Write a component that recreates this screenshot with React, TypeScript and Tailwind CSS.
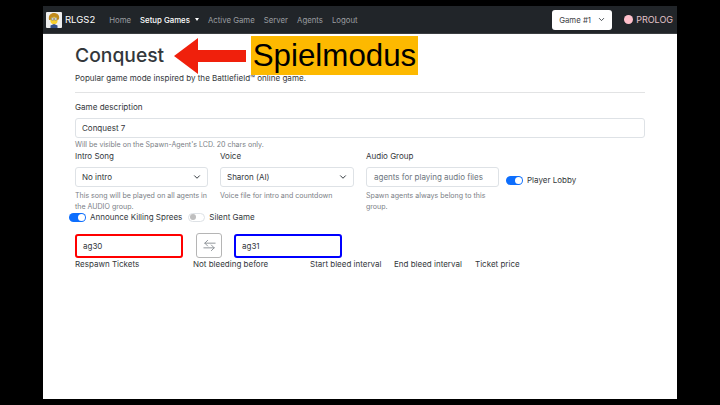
import React from "react";

const Chevron = ({ className = "" }: { className?: string }) => (
  <svg viewBox="0 0 16 16" className={className} fill="none" stroke="#343a40" strokeWidth="2" strokeLinecap="round" strokeLinejoin="round">
    <path d="m3 5.5 5 5 5-5" />
  </svg>
);

const Switch = ({ on }: { on: boolean }) =>
  on ? (
    <span className="flex h-[9px] w-[17px] shrink-0 items-center justify-end rounded-full bg-[#0d6efd] px-[1px]">
      <span className="h-[7px] w-[7px] rounded-full bg-white" />
    </span>
  ) : (
    <span className="flex h-[9px] w-[17px] shrink-0 items-center rounded-full border border-[#dee2e6] bg-white px-[1px]">
      <span className="h-[6px] w-[6px] rounded-full bg-[#bfbfbf]" />
    </span>
  );

const Select = ({ value, w }: { value: string; w: string }) => (
  <div className={`flex h-[20px] items-center justify-between rounded-[3px] border border-[#dee2e6] bg-white pl-[6px] pr-[6px] ${w}`}>
    <span>{value}</span>
    <Chevron className="h-[8px] w-[8px]" />
  </div>
);

export default function App() {
  return (
    <div className="flex h-[405px] w-[720px] bg-black pl-[43px] pt-[6px] pb-[6px] text-[8px] leading-[12px] text-[#33373b] [font-family:Inter,sans-serif]">
      <div className="relative flex h-[393px] w-[634px] flex-col bg-white">
        <nav className="flex h-[28px] shrink-0 items-center border-b border-[#3a3d40] bg-[#212529] pl-[3px] pr-[3px]">
          <svg viewBox="0 0 16 16" className="h-[16px] w-[16px] shrink-0">
            <rect width="16" height="16" rx="1" fill="#efefef" />
            <path d="M3 8C2 3 5 1 8 1s6 2 5 6l-1 1H4z" fill="#c08a1e" />
            <ellipse cx="8" cy="8.5" rx="3.6" ry="3.8" fill="#f7cf2e" />
            <circle cx="6.6" cy="7" r="1.4" fill="#fff" stroke="#333" strokeWidth="0.4" />
            <circle cx="9.6" cy="7" r="1.4" fill="#fff" stroke="#333" strokeWidth="0.4" />
            <circle cx="6.8" cy="7" r="0.4" fill="#222" />
            <circle cx="9.8" cy="7" r="0.4" fill="#222" />
            <path d="M4.5 16v-2.5L8 12l3.500 1.500V16z" fill="#33508a" />
          </svg>
          <span className="ml-[3px] text-[9.5px] text-white">RLGS2</span>
          <div className="ml-[14px] flex items-center gap-[9px] text-[7.8px] text-[#9a9da0]">
            <span>Home</span>
            <span className="flex items-center gap-[5px] font-medium text-white">
              Setup Games
              <span className="h-0 w-0 border-x-[2.5px] border-t-[3px] border-x-transparent border-t-white" />
            </span>
            <span>Active Game</span>
            <span>Server</span>
            <span>Agents</span>
            <span>Logout</span>
          </div>
          <div className="ml-auto flex h-[20px] w-[60px] items-center justify-between rounded-[3px] bg-white pl-[7px] pr-[7px] text-[7.8px] text-[#3d4145]">
            <span>Game #1</span>
            <Chevron className="h-[7px] w-[7px]" />
          </div>
          <span className="ml-[12px] h-[9px] w-[9px] rounded-full bg-[#ffc0cb]" />
          <span className="ml-[3px] mr-[1px] text-[9px] text-[#e3c3c9]">PROLOG</span>
        </nav>

        <main className="flex flex-col pl-[32px] pr-[32px]">
          <h1 className="mt-[9px] text-[19.3px] leading-[24px] font-medium">Conquest</h1>
          <p className="mt-[5px] text-[8.05px] leading-[12px]">Popular game mode inspired by the Battlefield™ online game.</p>
          <hr className="mt-[8px] border-[#e2e3e4]" />
          <label className="mt-[8px] text-[8.1px]">Game description</label>
          <div className="mt-[5px] flex h-[20px] items-center rounded-[3px] border border-[#dee2e6] pl-[6px]">Conquest 7</div>
          <p className="mt-[1px] text-[7.05px] leading-[11px] text-[#7b8086]">Will be visible on the Spawn-Agent's LCD. 20 chars only.</p>

          <div className="flex">
            <div className="w-[133px]">
              <label className="block leading-[12px]">Intro Song</label>
              <div className="mt-[5px]"><Select value="No intro" w="w-[133px]" /></div>
              <p className="mt-[3px] text-[7.05px] leading-[11px] text-[#7b8086]">This song will be played on all agents in the AUDIO group.</p>
            </div>
            <div className="ml-[12px] w-[134px]">
              <label className="block leading-[12px]">Voice</label>
              <div className="mt-[5px]"><Select value="Sharon (AI)" w="w-[134px]" /></div>
              <p className="mt-[3px] text-[7.05px] leading-[11px] text-[#7b8086]">Voice file for intro and countdown</p>
            </div>
            <div className="ml-[12px] w-[133px]">
              <label className="block leading-[12px]">Audio Group</label>
              <div className="mt-[5px] flex h-[20px] items-center rounded-[3px] border border-[#dee2e6] pl-[7px] text-[#6c757d]">agents for playing audio files</div>
              <p className="mt-[3px] text-[7.05px] leading-[11px] text-[#7b8086]">Spawn agents always belong to this group.</p>
            </div>
            <div className="ml-[7px] mt-[24px] flex h-[12px] items-center gap-[4px] self-start">
              <Switch on />
              <span>Player Lobby</span>
            </div>
          </div>

          <div className="-ml-[6px] -mt-[1px] flex items-center">
            <Switch on />
            <span className="ml-[4px]">Announce Killing Sprees</span>
            <span className="ml-[6px]"><Switch on={false} /></span>
            <span className="ml-[4px]">Silent Game</span>
          </div>

          <div className="mt-[10px] flex items-center">
            <div className="flex h-[24px] w-[108px] items-center rounded-[3px] border-2 border-[#ff0000] pl-[6px]">ag30</div>
            <div className="ml-[13px] flex h-[25px] w-[26px] items-center justify-center rounded-[3px] border border-[#b5b5b5]">
              <svg viewBox="0 0 16 16" className="h-[15px] w-[15px]" fill="none" stroke="#8a8f94" strokeWidth="1" strokeLinecap="round" strokeLinejoin="round">
                <path d="M14 5.500H3M6 2.500l-3 3 3 3M2 10.500h11M10 7.500l3 3-3 3" />
              </svg>
            </div>
            <div className="ml-[12px] flex h-[24px] w-[108px] items-center rounded-[3px] border-2 border-[#0000ff] pl-[6px]">ag31</div>
          </div>

          <div className="flex h-[12px] items-center">
            <span className="w-[118px]">Respawn Tickets</span>
            <span className="w-[117px]">Not bleeding before</span>
            <span className="w-[84px]">Start bleed interval</span>
            <span className="w-[81px]">End bleed interval</span>
            <span>Ticket price</span>
          </div>
        </main>

        <div className="absolute left-[208px] top-[30px] flex h-[39px] w-[167px] items-center justify-center bg-[#fdb900] text-[31.3px] text-black [font-family:'Liberation_Sans',sans-serif]">
          Spielmodus
        </div>
        <svg className="absolute left-[131px] top-[31px] h-[38px] w-[72px]" viewBox="0 0 72 38">
          <path d="M0 19 24 1v12h48v12H24v12z" fill="#f0200c" />
        </svg>
      </div>
    </div>
  );
}
